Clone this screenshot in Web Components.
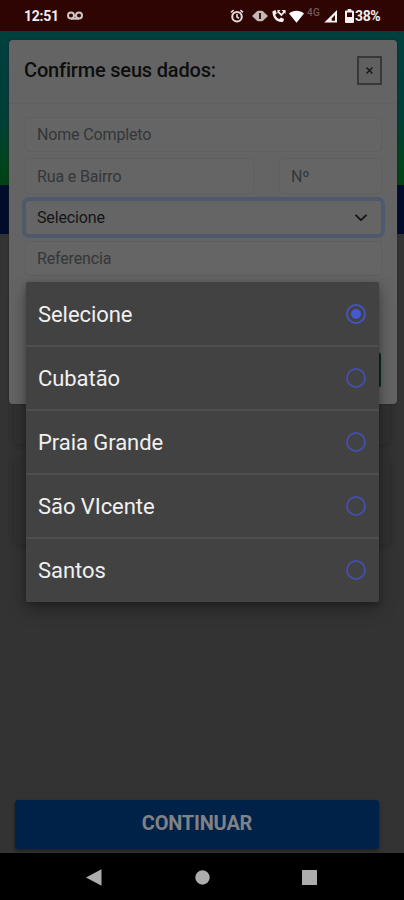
<!DOCTYPE html>
<html lang="pt-BR">
<head>
<meta charset="utf-8">
<title>Confirme seus dados</title>
<style>
html,body{margin:0;height:900px;overflow:hidden;background:#333;font-family:Roboto,"Liberation Sans",sans-serif}
</style>
</head>
<body>
<phone-screen></phone-screen>
<script>
const define=(name,html)=>customElements.define(name,class extends HTMLElement{
  constructor(){
    super();
    const t=document.createElement('template');
    t.innerHTML=html;
    this.attachShadow({mode:'open'}).append(t.content.cloneNode(true));
  }
});

define('status-bar',`<style>
:host{display:flex;box-sizing:border-box;height:31px;background:#2e0503;color:#f1eeee;align-items:center;padding:1px 22px 0 24px;font-size:14px;font-weight:700;line-height:16px}
.time{width:43px;letter-spacing:-.25px}
.gap{flex:1}
svg{display:block;flex:none}
.net{font-size:10px;font-weight:500;color:#755a58;line-height:10px;margin:-6px 2px 0 3px;width:14px;letter-spacing:.2px}
.pct{width:27px;letter-spacing:-.4px;font-size:14px}
</style>
<span class="time">12:51</span>
<svg width="16" height="10" viewBox="0 0 16 10" fill="none" stroke="#cfc5c4" stroke-width="2"><circle cx="4" cy="4.6" r="3"/><circle cx="12" cy="4.6" r="3"/><path d="M4 7.7h8"/></svg>
<span class="gap"></span>
<svg width="14" height="14" viewBox="0 0 14 14" fill="none" stroke="#e3dcdb" stroke-width="2"><circle cx="7" cy="7.7" r="4.8"/><path d="M7 5v3l2 1.2M1 3.4 3.6 1.2M13 3.4 10.4 1.2" stroke-width="1.6"/></svg>
<svg style="margin-left:8px" width="16" height="12" viewBox="0 0 16 12"><path d="M0 6 5 1.2h1.5v9.6H5ZM16 6l-5-4.8H9.5v9.6H11Z" fill="#c2b8b5"/><rect x="5" y="0.8" width="6" height="10.4" rx="1.2" fill="#c2b8b5"/><path d="M8 3v6" stroke="#2e0503" stroke-width="1.8"/></svg>
<svg style="margin-left:4px" width="14" height="14" viewBox="0 0 14 14"><path d="M.5 2.2 3.500 1 4.800 4.400 3.200 5.700C4 7.900 5.500 9.300 7.400 10L8.900 8.500 12.100 10 11.100 12.800C6 14.200.2 9.500.5 2.200Z" fill="#f5f1f0"/><path d="M6 2.600 9.400 6 13 2" fill="none" stroke="#f5f1f0" stroke-width="1.800"/><path d="M5.500 1h3L5.500 4.500ZM9.500 1h4v4Z" fill="#f5f1f0"/></svg>
<svg style="margin-left:3px" width="15" height="13" viewBox="0 0 15 13"><path d="M0 3.500C4.200-.2 10.800-.2 15 3.500L7.500 12.800Z" fill="#fff"/></svg>
<span class="net">4G</span>
<svg style="margin-left:1px" width="14" height="13" viewBox="0 0 14 13"><path fill-rule="evenodd" d="M13 0v12.500H.3ZM11 5 7.700 8.400v2.300H11Z" fill="#f5f1f0"/></svg>
<svg style="margin:0 1px 0 7px" width="9" height="14" viewBox="0 0 9 14"><path fill-rule="evenodd" d="M2.700 0h3.600v1.500H8q1 0 1 1V13q0 1-1 1H1q-1 0-1-1V2.500q0-1 1-1h1.700ZM2 3.500V8h5V3.500Z" fill="#f5f1f0"/></svg>
<span class="pct">38%</span>`);

define('page-backdrop',`<style>
:host{display:flex;flex-direction:column;height:822px;background:#333}
.hero{height:154px;background:linear-gradient(#00403d 0,#003e3c 35%,#003f36 58%,#00441c 88%,#004212)}
.nav{height:49px;background:#000c29}
.space{flex:1;padding:26px 14px 0;display:flex;flex-direction:column;gap:14px}
.card{height:184px;background:#313131;border-radius:4px;box-shadow:0 2px 6px #0003}
.card+.card{height:86px}
.go{display:flex;align-items:center;justify-content:center;box-sizing:border-box;padding-bottom:3px;margin:0 25px 4px 15px;height:49px;border-radius:3px;background:#002248;color:#808285;font-weight:700;font-size:20px;letter-spacing:-.2px;box-shadow:0 2px 4px #0006}
</style>
<div class="hero"></div><div class="nav"></div><div class="space"><div class="card"></div><div class="card"></div></div><div class="go">CONTINUAR</div>`);

define('form-field',`<style>
:host{display:flex;align-items:center;box-sizing:border-box;border:1px solid #5f5f5f;border-radius:4px;background:#656565;padding:0 11px;color:#343638;font-size:16px;letter-spacing:-.15px;height:35px;min-width:0}
:host([focused]){border-color:#4e5a6c;box-shadow:0 0 0 3px #4e5a6b;color:#151515}
.label{flex:1}
svg{display:none}
:host([focused]) svg{display:block;margin-right:3px}
</style>
<span class="label"><slot></slot></span>
<svg width="12" height="8" viewBox="0 0 12 8" fill="none" stroke="#151515" stroke-width="1.800" stroke-linecap="round" stroke-linejoin="round"><path d="m1 1.300 5 4.900 5-4.900"/></svg>`);

define('data-dialog',`<style>
:host{display:block;box-sizing:border-box;background:#646464;border-radius:4px;height:364px;box-shadow:0 0 2px #222}
header{display:flex;justify-content:space-between;box-sizing:border-box;height:64px;border-bottom:1px solid #606060;padding:16px 15px 0 15px;color:#0e0e0e}
h1{margin:0;font-size:20px;font-weight:500;line-height:28px;white-space:nowrap;letter-spacing:-.18px}
.close{display:flex;box-sizing:border-box;width:25px;height:29px;border:2px solid #383838;align-items:center;justify-content:center;background:#606060}
form{display:grid;grid-template-rows:35px 36px 35px 35px;row-gap:6px;padding:13px 15px 0 16px}
.pair{display:grid;grid-template-columns:229px 103px;justify-content:space-between}
.pair form-field{height:36px}
footer{display:flex;justify-content:flex-end;padding:76px 16px 0}
.send{width:90px;height:36px;background:#052d1a;border-radius:4px}
</style>
<header><h1>Confirme seus dados:</h1><div class="close"><svg width="7" height="7" viewBox="0 0 7 7" stroke="#151515" stroke-width="1.400"><path d="m.5.5 6 6m0-6-6 6"/></svg></div></header>
<form><form-field>Nome Completo</form-field>
<div class="pair"><form-field>Rua e Bairro</form-field><form-field>Nº</form-field></div>
<form-field focused>Selecione</form-field><form-field>Referencia</form-field></form>
<footer><div class="send"></div></footer>`);

define('radio-option',`<style>
:host{display:flex;box-sizing:border-box;height:64px;align-items:center;justify-content:space-between;padding:0 13px 0 12px;border-bottom:2px solid #4e4e4e;color:#f0f0f0;font-size:22px;letter-spacing:-.06px}
:host(:last-child){border-color:transparent}
i{box-sizing:border-box;width:20px;height:20px;border:2px solid #444fa8;border-radius:50%;display:grid;place-items:center}
:host([checked]) i{border-color:#4453bd}
:host([checked]) i::after{content:"";width:10px;height:10px;border-radius:50%;background:#4659d2}
</style><span><slot></slot></span><i></i>`);

define('option-list',`<style>
:host{display:block;box-sizing:border-box;padding-top:1px;background:#424242;border-radius:2px;box-shadow:0 7px 18px #0005,0 2px 5px #0003;height:320px}
</style><slot></slot>`);

define('nav-bar',`<style>
:host{display:flex;height:47px;background:#000;align-items:center;justify-content:space-between;box-sizing:border-box;padding:1px 87px 0 86px}
svg{display:block}
</style>
<svg width="16" height="17" viewBox="0 0 16 17"><path d="M0 8.500 15.500.3v16.400Z" fill="#adadad"/></svg>
<svg width="15" height="15" viewBox="0 0 15 15"><circle cx="7.500" cy="7.500" r="7.200" fill="#adadad"/></svg>
<svg width="15" height="15" viewBox="0 0 15 15"><rect width="15" height="15" rx=".5" fill="#adadad"/></svg>`);

define('phone-screen',`<style>
:host{display:flex;flex-direction:column;width:404px;height:900px;position:relative;overflow:hidden}
data-dialog{position:absolute;left:9px;top:40px;width:388px}
option-list{position:absolute;left:26px;top:282px;width:353px}
</style>
<status-bar></status-bar><page-backdrop></page-backdrop><nav-bar></nav-bar>
<data-dialog></data-dialog>
<option-list><radio-option checked>Selecione</radio-option><radio-option>Cubatão</radio-option><radio-option>Praia Grande</radio-option><radio-option>São VIcente</radio-option><radio-option>Santos</radio-option></option-list>`);
</script>
</body>
</html>
